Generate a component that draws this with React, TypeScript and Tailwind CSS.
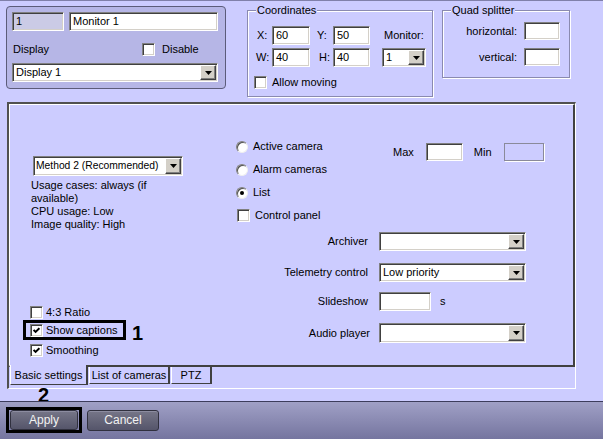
import React from "react";

function Check({ checked = false }: { checked?: boolean }) {
  return (
    <span className="w-[13px] h-[13px] shrink-0 bg-white border border-t-[#808080] border-l-[#808080] border-b-white border-r-white shadow-[inset_1px_1px_0_#404040,inset_-1px_-1px_0_#d4d0c8] flex items-center justify-center">
      {checked && (
        <svg width="7" height="7" viewBox="0 0 7 7">
          <path d="M0.6 3 L2.6 5 L6.4 1.2" fill="none" stroke="#000" strokeWidth="1.9" />
        </svg>
      )}
    </span>
  );
}

function Radio({ checked = false }: { checked?: boolean }) {
  return (
    <span className="w-[12px] h-[12px] shrink-0 rounded-full bg-white border border-t-[#808080] border-l-[#808080] border-b-[#f0f0f0] border-r-[#f0f0f0] shadow-[inset_1px_1px_0_#505050] flex items-center justify-center">
      {checked && <span className="w-[4px] h-[4px] rounded-full bg-black" />}
    </span>
  );
}

function Arrow() {
  return (
    <span className="w-[16px] h-full shrink-0 bg-[#d4d0c8] border border-t-white border-l-white border-r-[#404040] border-b-[#404040] shadow-[inset_-1px_-1px_0_#808080] flex items-center justify-center">
      <svg width="7" height="4" viewBox="0 0 7 4">
        <path d="M0 0H7L3.5 4Z" fill="#000" />
      </svg>
    </span>
  );
}

const sunken =
  "border border-t-[#808080] border-l-[#808080] border-b-white border-r-white shadow-[inset_1px_1px_0_#404040,inset_-1px_-1px_0_#d4d0c8]";

function Field({
  className = "",
  children,
}: {
  className?: string;
  children?: React.ReactNode;
}) {
  return (
    <div className={`${sunken} flex items-center pl-[3px] leading-none ${className}`}>
      {children}
    </div>
  );
}

function Select({
  className = "",
  value = "",
  textClass = "",
}: {
  className?: string;
  value?: string;
  textClass?: string;
}) {
  return (
    <div className={`${sunken} bg-white flex items-stretch p-[1px] ${className}`}>
      <span className={`flex-1 flex items-center pl-[2px] leading-none whitespace-nowrap overflow-hidden ${textClass}`}>
        {value}
      </span>
      <Arrow />
    </div>
  );
}

export default function App() {
  return (
    <div className="w-[603px] h-[439px] bg-[#ccccff] overflow-hidden flex flex-col text-[11px] text-black font-['Liberation_Sans',Arial,sans-serif] shadow-[inset_0_1px_0_#8080aa]">
      {/* top section */}
      <div className="h-[102px] flex items-start shrink-0">
        {/* monitor panel */}
        <div className="ml-[6px] mt-[6px] w-[220px] h-[83px] rounded-[4px] border border-[#5c5c7a] bg-[#b6b6e6] pt-[5px] pl-[5px]">
          <div className="flex">
            <Field className="w-[52px] h-[19px] bg-[#cbcbe6]">1</Field>
            <Field className="ml-[5px] w-[149px] h-[19px] bg-white">Monitor 1</Field>
          </div>
          <div className="mt-[12px] h-[13px] flex items-center">
            <span className="w-[130px] pl-[1px]">Display</span>
            <Check />
            <span className="ml-[7px]">Disable</span>
          </div>
          <Select className="mt-[7px] w-[206px] h-[19px]" value="Display 1" />
        </div>

        {/* Coordinates */}
        <div className="relative ml-[21px] mt-[10px] w-[186px] h-[87px] border border-[#8a8ab0] shadow-[1px_1px_0_#ffffff,inset_1px_1px_0_#ffffff] pl-[9px] pt-[15px]">
          <span className="absolute left-[8px] top-[-8px] px-[1px] bg-[#ccccff] leading-[14px]">Coordinates</span>
          <div className="flex items-center h-[19px]">
            <span className="w-[15px]">X:</span>
            <Field className="w-[38px] h-[19px] bg-white">60</Field>
            <span className="ml-[7px] w-[16px]">Y:</span>
            <Field className="w-[37px] h-[19px] bg-white">50</Field>
            <span className="ml-[14px]">Monitor:</span>
          </div>
          <div className="mt-[3px] flex items-center h-[19px]">
            <span className="w-[15px] -ml-[1px] pr-[1px]">W:</span>
            <Field className="ml-[1px] w-[38px] h-[19px] bg-white">40</Field>
            <span className="ml-[9px] w-[14px]">H:</span>
            <Field className="w-[37px] h-[19px] bg-white">40</Field>
            <Select className="ml-[12px] w-[44px] h-[19px]" value="1" />
          </div>
          <div className="mt-[9px] flex items-center h-[13px] -ml-[3px]">
            <Check />
            <span className="ml-[5px]">Allow moving</span>
          </div>
        </div>

        {/* Quad splitter */}
        <div className="relative ml-[9px] mt-[10px] w-[128px] h-[68px] border border-[#8a8ab0] shadow-[1px_1px_0_#ffffff,inset_1px_1px_0_#ffffff] pt-[11px]">
          <span className="absolute left-[8px] top-[-8px] px-[1px] bg-[#ccccff] leading-[14px]">Quad splitter</span>
          <div className="flex items-center h-[18px]">
            <span className="w-[74px] text-right">horizontal:</span>
            <Field className="ml-[7px] w-[36px] h-[18px] bg-white" />
          </div>
          <div className="mt-[8px] flex items-center h-[18px]">
            <span className="w-[74px] text-right">vertical:</span>
            <Field className="ml-[7px] w-[36px] h-[18px] bg-white" />
          </div>
        </div>
      </div>

      {/* tab control */}
      <div className="ml-[7px] w-[569px] h-[287px] shrink-0 border-t-2 border-l-2 border-t-[#505050] border-l-[#505050] border-r border-b border-r-white border-b-white flex flex-col">
        <div className="h-[263px] shrink-0 border-t border-l border-t-white border-l-white border-r-2 border-b-2 border-r-[#404040] border-b-[#404040] flex">
          {/* left column */}
          <div className="w-[226px] shrink-0 flex flex-col">
            <Select
              className="mt-[51px] ml-[23px] w-[150px] h-[20px]"
              textClass="text-[10.3px] !pl-[1px]"
              value="Method 2 (Recommended)"
            />
            <div className="mt-[3px] ml-[21px] leading-[13px]">
              <div>Usage cases: always (if</div>
              <div>available)</div>
              <div>CPU usage: Low</div>
              <div>Image quality: High</div>
            </div>
            <div className="mt-[75px] ml-[20px] h-[13px] flex items-center">
              <Check />
              <span className="ml-[3px]">4:3 Ratio</span>
            </div>
            <div className="mt-[1px] flex items-start">
              <div className="ml-[13px] w-[103px] h-[20px] border-[3px] border-black pl-[4px] flex items-center">
                <Check checked />
                <span className="ml-[3px]">Show captions</span>
              </div>
              <span className="ml-[6px] mt-[3px] text-[20px] font-bold leading-[20px]">1</span>
            </div>
            <div className="mt-[1px] ml-[20px] h-[13px] flex items-center">
              <Check checked />
              <span className="ml-[3px]">Smoothing</span>
            </div>
          </div>

          {/* right column */}
          <div className="flex-1 pt-[30px]">
            <div className="flex items-start">
              <div className="w-[157px] shrink-0">
                <div className="h-[23px] flex items-center">
                  <Radio />
                  <span className="ml-[5px]">Active camera</span>
                </div>
                <div className="h-[23px] flex items-center">
                  <Radio />
                  <span className="ml-[5px]">Alarm cameras</span>
                </div>
                <div className="h-[23px] flex items-center">
                  <Radio checked />
                  <span className="ml-[5px]">List</span>
                </div>
                <div className="h-[23px] flex items-center pl-[1px]">
                  <Check />
                  <span className="ml-[5px]">Control panel</span>
                </div>
              </div>
              <div className="mt-[8px] flex items-center h-[18px]">
                <span>Max</span>
                <Field className="ml-[12px] w-[37px] h-[18px] bg-white" />
                <span className="ml-[11px]">Min</span>
                <div className="ml-[12px] w-[40px] h-[18px] border border-[#8a8a9a] shadow-[1px_1px_0_#ffffff] bg-[#ccccff]" />
              </div>
            </div>
            <div className="mt-[5px]">
              <div className="flex items-center h-[19px]">
                <span className="w-[132px] text-right">Archiver</span>
                <Select className="ml-[11px] w-[147px] h-[19px]" />
              </div>
              <div className="mt-[12px] flex items-center h-[19px]">
                <span className="w-[132px] text-right">Telemetry control</span>
                <Select className="ml-[11px] w-[147px] h-[19px]" value="Low priority" />
              </div>
              <div className="mt-[10px] flex items-center h-[19px]">
                <span className="w-[132px] text-right">Slideshow</span>
                <Field className="ml-[11px] w-[52px] h-[19px] bg-white" />
                <span className="ml-[9px]">s</span>
              </div>
              <div className="mt-[12px] flex items-center h-[20px]">
                <span className="w-[134px] text-right">Audio player</span>
                <Select className="ml-[9px] w-[147px] h-[20px]" />
              </div>
            </div>
          </div>
        </div>
        {/* tabs */}
        <div className="flex items-start h-[20px]">
          <div className="relative -mt-[2px] ml-[1px] w-[78px] h-[20px] bg-[#ccccff] border-l border-l-white border-r-2 border-r-[#404040] border-b border-b-[#404040] flex items-center justify-center pt-[1px]">
            Basic settings
          </div>
          <div className="ml-[1px] w-[81px] h-[17px] border-l border-l-white border-r-2 border-r-[#404040] border-b border-b-[#404040] flex items-center justify-center">
            List of cameras
          </div>
          <div className="ml-[1px] w-[41px] h-[17px] border-l border-l-white border-r-2 border-r-[#404040] border-b border-b-[#404040] flex items-center justify-center">
            PTZ
          </div>
        </div>
      </div>

      {/* annotation 2 */}
      <div className="h-[12px] shrink-0">
        <span className="block ml-[38px] -mt-[2px] text-[20px] font-bold leading-[16px]">2</span>
      </div>

      {/* bottom bar */}
      <div className="flex-1 border-t border-t-[#3d3d5c] bg-gradient-to-b from-[#a0a0c6] to-[#75759f] flex items-center pl-[6px] pb-[1px]">
        <div className="w-[76px] h-[26px] border-[3px] border-black px-[1px] flex">
          <button className="flex-1 rounded-[3px] border border-[#30303e] bg-gradient-to-b from-[#767688] to-[#55556a] text-[12px] text-[#f2f2f2] shadow-[inset_0_1px_0_#8c8ca0]">
            Apply
          </button>
        </div>
        <button className="ml-[5px] w-[72px] h-[21px] rounded-[3px] border border-[#30303e] bg-gradient-to-b from-[#767688] to-[#55556a] text-[12px] text-[#f2f2f2] shadow-[inset_0_1px_0_#8c8ca0]">
          Cancel
        </button>
      </div>
    </div>
  );
}
